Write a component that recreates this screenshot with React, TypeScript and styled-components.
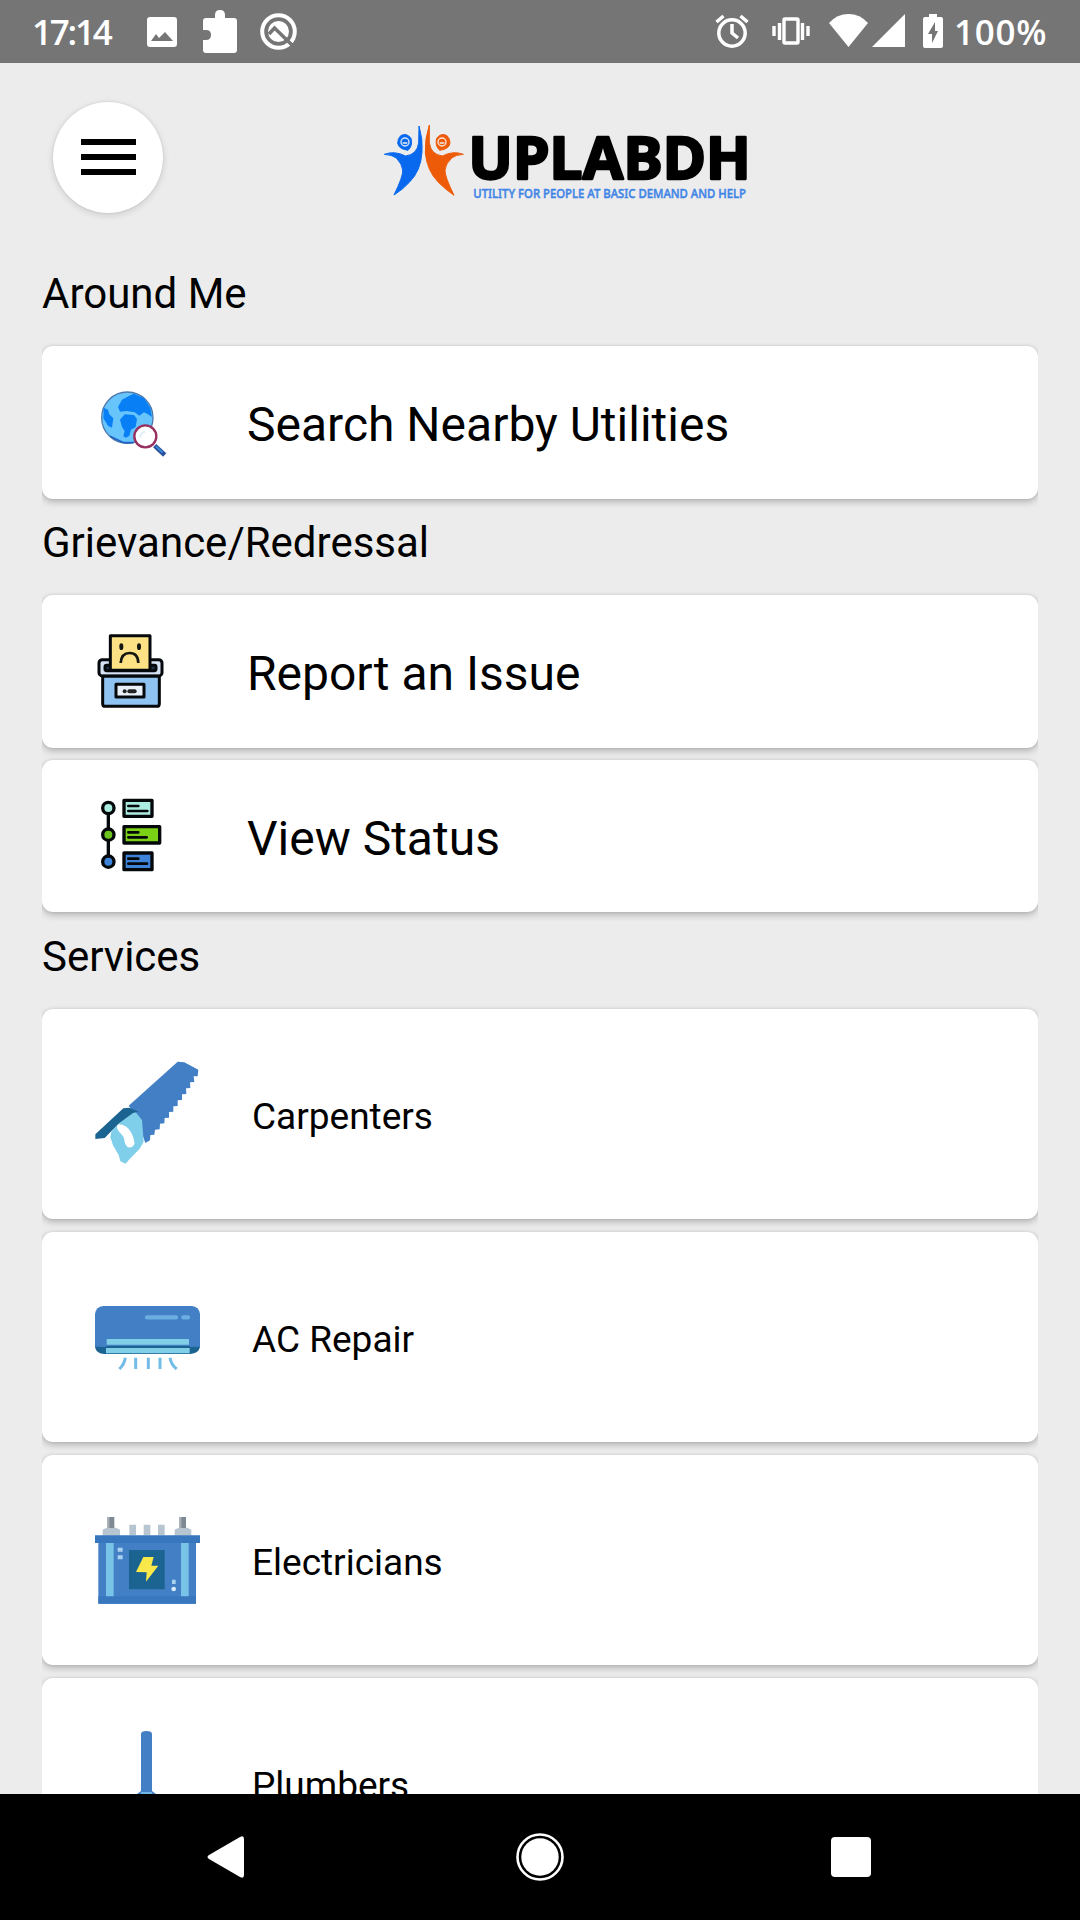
import React from "react";
import styled, { createGlobalStyle } from "styled-components";

const Global = createGlobalStyle`
  * { box-sizing: border-box; }
  body { margin: 0; background: #ececec; }
  svg { display: block; flex: none; }
`;

const Screen = styled.div`
  width: 1080px;
  height: 1920px;
  display: flex;
  flex-direction: column;
  overflow: hidden;
  background: #ececec;
  color: #000;
  font-family: Roboto, "Liberation Sans", sans-serif;
`;

const StatusBar = styled.header`
  flex: none;
  height: 63px;
  padding: 0 33px 0 32px;
  display: flex;
  justify-content: space-between;
  background: #757575;
  color: #fff;
`;

const StatusGroup = styled.div`
  display: flex;
  align-items: flex-start;
`;

const StatusText = styled.span<{ $w: number; $spacing: number; $left?: number }>`
  width: ${(p) => p.$w}px;
  margin-left: ${(p) => p.$left ?? 0}px;
  font: 600 35px/64px "Open Sans", "Noto Sans", sans-serif;
  letter-spacing: ${(p) => p.$spacing}px;
  white-space: nowrap;
`;

const Glyph = styled.svg<{ $top: number; $left: number }>`
  margin: ${(p) => p.$top}px 0 0 ${(p) => p.$left}px;
`;

const Header = styled.div`
  flex: none;
  height: 192px;
  padding: 39px 0 0 53px;
  display: flex;
  align-items: flex-start;
`;

const MenuButton = styled.button`
  width: 110px;
  height: 111px;
  padding: 0 0 2px;
  border: 0;
  border-radius: 50%;
  background: #fff;
  box-shadow: 0 2px 7px rgba(0, 0, 0, 0.14), 0 0 2px rgba(0, 0, 0, 0.12);
  display: flex;
  flex-direction: column;
  align-items: center;
  justify-content: center;
  gap: 9px;
`;

const MenuLine = styled.span`
  width: 55px;
  height: 6px;
  background: #000;
`;

const Logo = styled.svg`
  margin: 8px 0 0 207px;
`;

const Content = styled.main`
  flex: 1;
  min-height: 0;
  overflow: hidden;
  padding: 0 42px;
`;

const SectionTitle = styled.h2<{ $h: number; $top: number }>`
  margin: 0;
  height: ${(p) => p.$h}px;
  padding-top: ${(p) => p.$top}px;
  font-size: 42px;
  line-height: 49px;
  font-weight: 400;
`;

const CardList = styled.div<{ $gap: number }>`
  display: flex;
  flex-direction: column;
  gap: ${(p) => p.$gap}px;
  clip-path: inset(-10px 0 -14px 0);
`;

const Card = styled.div<{ $large?: boolean }>`
  height: ${(p) => (p.$large ? 210 : 152.5)}px;
  flex: none;
  display: flex;
  align-items: center;
  background: #fff;
  border-radius: 11px;
  box-shadow: 0 3px 7px rgba(0, 0, 0, 0.24), 0 0 3px rgba(0, 0, 0, 0.1);
`;

const IconSlot = styled.div<{ $w: number; $left: number; $top?: number }>`
  width: ${(p) => p.$w}px;
  padding: ${(p) => p.$top ?? 0}px 0 0 ${(p) => p.$left}px;
  flex: none;
`;

const CardText = styled.span<{ $large?: boolean }>`
  font-size: ${(p) => (p.$large ? 37 : 48)}px;
  line-height: 60px;
  padding-top: ${(p) => (p.$large ? 7 : 6)}px;
  white-space: nowrap;
`;

const NavBar = styled.nav`
  flex: none;
  height: 126px;
  background: #000;
  display: flex;
  align-items: center;
  padding: 0 0 0 207px;
`;

const NavItem = styled.div<{ $gap: number }>`
  margin-right: ${(p) => p.$gap}px;
`;

const GlobeIcon = () => (
  <svg width="68" height="68" viewBox="210 182 204 204">
    <circle cx="292" cy="262" r="77" fill="#67c5fc" stroke="#4f79ad" strokeWidth="4" />
    <path d="M264 230l12-22 22-12 14-6 30 14 19 28 5 28-12-8-12-6-14 10-14-10-24-4-20 2z" fill="#087ff5" />
    <path d="M221 232l13 6 4 14 12 12-4 28-12-6-14-22z" fill="#087ff5" />
    <path d="M270 268l14-16 28 2 9 12-4 24-14 8-5 18-10 6-8-4 4-16-8-12z" fill="#087ff5" />
    <path d="M240 318l30 14 12 5h28" fill="none" stroke="#1f63c4" strokeWidth="5" />
    <path d="M374 346l30 28" stroke="#29509a" strokeWidth="14" />
    <path d="M378 348l20 19" stroke="#3b8de0" strokeWidth="5" />
    <circle cx="346" cy="318" r="33" fill="#fff" stroke="#97305f" strokeWidth="7" />
    <path d="M330 322q2-16 16-18" fill="none" stroke="#dcecfa" strokeWidth="5" />
  </svg>
);

const ReportIcon = () => (
  <svg width="67" height="75" viewBox="53 70 201 225">
    <g stroke="#06090c" strokeWidth="9" strokeLinejoin="round">
      <rect x="59" y="147" width="189" height="49" rx="10" fill="#d3e2f4" />
      <rect x="77" y="164" width="153" height="16" rx="5" fill="#1f3348" />
      <path d="M70 197h170v82q0 8-8 8H78q-8 0-8-8z" fill="#8fc3f2" />
      <path d="M93 75h119v104H93z" fill="#fde285" />
      <rect x="110" y="221" width="84" height="38" fill="#e9f2fa" />
    </g>
    <ellipse cx="126" cy="108" rx="6" ry="10" fill="#141610" />
    <ellipse cx="179" cy="108" rx="6" ry="10" fill="#141610" />
    <path d="M124 157q2-30 27-30t26 30" fill="none" stroke="#141610" strokeWidth="8" />
    <circle cx="136" cy="242" r="6" fill="#222" />
    <path d="M150 242h16" stroke="#222" strokeWidth="12" strokeLinecap="round" />
  </svg>
);

const StatusIcon = () => (
  <svg width="62" height="75" viewBox="60 54 186 225">
    <g stroke="#05080a" strokeWidth="10" strokeLinejoin="round">
      <path d="M85 84v160" strokeWidth="10" />
      <circle cx="85" cy="84" r="17" fill="#abece1" />
      <circle cx="85" cy="164" r="17" fill="#6cc51e" />
      <circle cx="85" cy="245" r="17" fill="#3d83d8" />
      <rect x="132" y="61" width="84" height="48" fill="#abece1" />
      <rect x="132" y="140" width="107" height="49" fill="#7bd116" />
      <rect x="132" y="219" width="84" height="50" fill="#3d83d8" />
      <path d="M145 78h30M145 93h57M145 157h30M145 172h55M145 236h30M145 251h56" strokeLinecap="round" strokeWidth="8" />
    </g>
  </svg>
);

const SawIcon = () => (
  <svg width="105" height="105" viewBox="44 64 315 315">
    <path d="M145 198L292 66l20 2 42 22-2 20-12 0 2 17-13 1 1 17-13 1 1 17-13 1 0 17-13 1 0 17-13 1 0 16-13 1 0 17-13 1-1 16-13 1-1 17-14 1-2 15-12 1-1 16-14 8-30-85z" fill="#427fc4" />
    <path d="M93 276l50-57 22-3 20 25 5 65-12 21-32 33-10 12-16-7-5-19-17-29-8-25z" fill="#7fcfeb" />
    <path d="M111 254q29-1 43 27 16 35 1 41-17 6-22-16-1-16-14-27-12-11-8-25z" fill="#fff" />
    <path d="M45 284l84-78 18-2 28 12-17 4-42 31-43 44-28 3z" fill="#1b6390" />
  </svg>
);

const AcIcon = () => (
  <svg width="105" height="64" viewBox="45 77 315 192">
    <path d="M45 190v10q4 21 28 21h258q25-2 29-21v-10z" fill="#1b6390" />
    <path d="M70 77h265q22 2 25 24v98l-30 1H78l-33-1v-98q3-22 25-24z" fill="#427fc4" />
    <path d="M78 197h252v6H78z" fill="#1b6390" />
    <path d="M80 176h247v17H80zM78 203h251v16H78z" fill="#80cfe7" />
    <path d="M201 111h87M310 111h14" stroke="#6bafe2" strokeWidth="13" strokeLinecap="round" />
    <path d="M136 232q-3 20-18 34M167 232v34M205 232v34M240 232v34M270 232q3 20 20 34" fill="none" stroke="#73bce7" strokeWidth="9" />
  </svg>
);

const BatteryIcon = () => (
  <svg width="105" height="88" viewBox="45 48 315 264">
    <path d="M68 89l12-6h28l12 6v18H68zM284 89l12-6h26l12 6v18h-50zM148 74h20v32h-20zM191 74h20v32h-20zM234 74h20v32h-20z" fill="#b7c5d0" />
    <path d="M81 51h22v33H81zM297 51h21v33h-21z" fill="#7e8993" />
    <path d="M81 51h7v33h-7zM297 51h7v33h-7z" fill="#a9b1b9" />
    <path d="M55 120h293v191H55z" fill="#427fc4" />
    <path d="M45 106h315v23H45z" fill="#3876be" />
    <path d="M55 289h293v22H55z" fill="#3876be" />
    <path d="M78 129h23v160H78zM303 129h23v160h-23z" fill="#78c4e9" />
    <path d="M147 150h107v118H147z" fill="#1b6390" />
    <path d="M190 171h31l-7 26h21l-37 48 2-28-32-1z" fill="#f8e84a" />
    <path d="M113 143h15v12h-15zM113 166h15v12h-15zM276 239h11v13h-11z" fill="#a9d2f0" />
    <circle cx="281" cy="267" r="7" fill="#d5ebfa" />
  </svg>
);

const PlumberIcon = () => (
  <svg width="105" height="104" viewBox="0 0 105 104">
    <path d="M46 3q0-3 5.500-3t5.500 3v57l4 3v41H42V63l4-3z" fill="#427fc4" />
    <path d="M46 61h11v10H46z" fill="#70b5e5" />
  </svg>
);

const issueCards = [
  { title: "Report an Issue", icon: <ReportIcon />, left: 55 },
  { title: "View Status", icon: <StatusIcon />, left: 58 },
];

const serviceCards = [
  { title: "Carpenters", icon: <SawIcon />, top: 0 },
  { title: "AC Repair", icon: <AcIcon />, top: 2 },
  { title: "Electricians", icon: <BatteryIcon />, top: 0 },
  { title: "Plumbers", icon: <PlumberIcon />, top: 0 },
];

export default function App() {
  return (
    <Screen>
      <Global />
      <StatusBar>
        <StatusGroup>
          <StatusText $w={83} $spacing={-2.2}>17:14</StatusText>
          <Glyph $top={17} $left={32} width="30" height="30" viewBox="0 0 30 30">
            <path fillRule="evenodd" fill="#fff" d="M3 0h24q3 0 3 3v24q0 3-3 3H3q-3 0-3-3V3q0-3 3-3zM4 24h22l-8-9-6 6-3-4z" />
          </Glyph>
          <Glyph $top={10} $left={26} width="34" height="43" viewBox="0 0 34 43">
            <path fill="#fff" d="M3 8h9V5q0-5 5-5t5 5v3h9q3 0 3 3v29q0 3-3 3H3q-3 0-3-3V30h3q5 0 5-5t-5-5H0v-9q0-3 3-3z" />
          </Glyph>
          <Glyph $top={13} $left={23} width="37" height="37" viewBox="0 0 37 37">
            <circle cx="18.500" cy="18.500" r="16.300" fill="none" stroke="#fff" strokeWidth="4" />
            <circle cx="18.500" cy="18.500" r="10.500" fill="#fff" />
            <path d="M9 21l5.500-6L32 32" fill="none" stroke="#757575" strokeWidth="3.500" />
          </Glyph>
        </StatusGroup>
        <StatusGroup>
          <Glyph $top={14} $left={0} width="34" height="34" viewBox="0 0 34 34">
            <g fill="none" stroke="#fff" strokeWidth="3.500">
              <circle cx="17" cy="19" r="13.200" />
              <path d="M17 10v9l6 5M1.500 8l7-6M32.500 8l-7-6" />
            </g>
          </Glyph>
          <Glyph $top={17} $left={23} width="38" height="28" viewBox="0 0 38 28">
            <g fill="none" stroke="#fff" strokeWidth="3.400">
              <rect x="12" y="2" width="14" height="24" rx="1" />
              <path d="M2 9v10M7.500 6v17M36 9v10M30.500 6v17" />
            </g>
          </Glyph>
          <Glyph $top={14} $left={19} width="39" height="33" viewBox="0 0 39 33">
            <path fill="#fff" d="M0 9Q8 0 19.500 0T39 9L19.500 33z" />
          </Glyph>
          <Glyph $top={14} $left={4} width="33" height="33" viewBox="0 0 33 33">
            <path fill="#fff" d="M0 33L33 0v33z" />
          </Glyph>
          <Glyph $top={14} $left={18} width="20" height="34" viewBox="0 0 20 34">
            <path fillRule="evenodd" fill="#fff" d="M6 0h8v3h4q2 0 2 2v27q0 2-2 2H2q-2 0-2-2V5q0-2 2-2h4zM12 8L5 20h4v9l6-12h-3z" />
          </Glyph>
          <StatusText $w={93} $spacing={0.7} $left={11}>100%</StatusText>
        </StatusGroup>
      </StatusBar>

      <Header>
        <MenuButton aria-label="Menu">
          <MenuLine />
          <MenuLine />
          <MenuLine />
        </MenuButton>
        <Logo width="390" height="100" viewBox="0 0 1170 300">
          <g fill="#0869ef" stroke="#0869ef" strokeWidth="3" strokeLinejoin="round">
            <path d="M43 133q30-12 64 5 35-5 39-40l1-50q12 39 9 78-3 56-38 91-19 21-46 38 28-57 26-75-1-17-19-36-14-10-36-11z" />
            <path d="M92 77q18-10 31 8 6 22-9 36-29-4-31-22 0-13 9-22z" />
          </g>
          <g fill="#ee5b08" stroke="#ee5b08" strokeWidth="3" strokeLinejoin="round">
            <path d="M280 133q-30-12-63 5-35-5-39-40V45q-14 42-12 84 5 53 39 88 20 20 47 39-28-57-27-76 1-18 20-36 13-10 35-11z" />
            <path d="M231 77q-18-10-31 8-6 22 9 36 29-4 31-22 0-13-9-22z" />
          </g>
          <circle cx="105" cy="96" r="12" fill="none" stroke="#d7e7fb" strokeWidth="4" />
          <circle cx="216" cy="96" r="12" fill="none" stroke="#fde3d5" strokeWidth="4" />
          <path d="M98 99h14M209 99h14" stroke="#eee" strokeWidth="4" />
          <text x="295" y="206" stroke="#000" strokeWidth="7" strokeLinejoin="round" fontFamily="Noto Sans, sans-serif" fontWeight="700" fontSize="180" textLength="848" lengthAdjust="spacingAndGlyphs">UPLABDH</text>
          <text x="310" y="264" fill="#3f85e6" stroke="#3f85e6" strokeWidth="1.500" fontFamily="Noto Sans, sans-serif" fontWeight="500" fontSize="39" textLength="818" lengthAdjust="spacingAndGlyphs">UTILITY FOR PEOPLE AT BASIC DEMAND AND HELP</text>
        </Logo>
      </Header>

      <Content>
        <SectionTitle $h={91} $top={14}>Around Me</SectionTitle>
        <CardList $gap={12}>
          <Card>
            <IconSlot $w={205} $left={58} $top={6}><GlobeIcon /></IconSlot>
            <CardText>Search Nearby Utilities</CardText>
          </Card>
        </CardList>
        <SectionTitle $h={96.5} $top={19}>Grievance/Redressal</SectionTitle>
        <CardList $gap={12}>
          {issueCards.map((c) => (
            <Card key={c.title}>
              <IconSlot $w={205} $left={c.left}>{c.icon}</IconSlot>
              <CardText>{c.title}</CardText>
            </Card>
          ))}
        </CardList>
        <SectionTitle $h={96.5} $top={20}>Services</SectionTitle>
        <CardList $gap={13}>
          {serviceCards.map((c) => (
            <Card key={c.title} $large>
              <IconSlot $w={210} $left={53} $top={c.top}>{c.icon}</IconSlot>
              <CardText $large>{c.title}</CardText>
            </Card>
          ))}
        </CardList>
      </Content>

      <NavBar>
        <NavItem $gap={272}>
          <svg width="37" height="42" viewBox="0 0 37 42">
            <path d="M2 19L33 1q4-2 4 2v36q0 4-4 2L2 23q-3-2 0-4z" fill="#fff" />
          </svg>
        </NavItem>
        <NavItem $gap={267}>
          <svg width="48" height="48" viewBox="0 0 48 48">
            <circle cx="24" cy="24" r="22.500" fill="none" stroke="#fff" strokeWidth="2.600" />
            <circle cx="24" cy="24" r="18.700" fill="#fff" />
          </svg>
        </NavItem>
        <NavItem $gap={0}>
          <svg width="40" height="40" viewBox="0 0 40 40">
            <rect width="40" height="40" rx="4" fill="#fff" />
          </svg>
        </NavItem>
      </NavBar>
    </Screen>
  );
}
